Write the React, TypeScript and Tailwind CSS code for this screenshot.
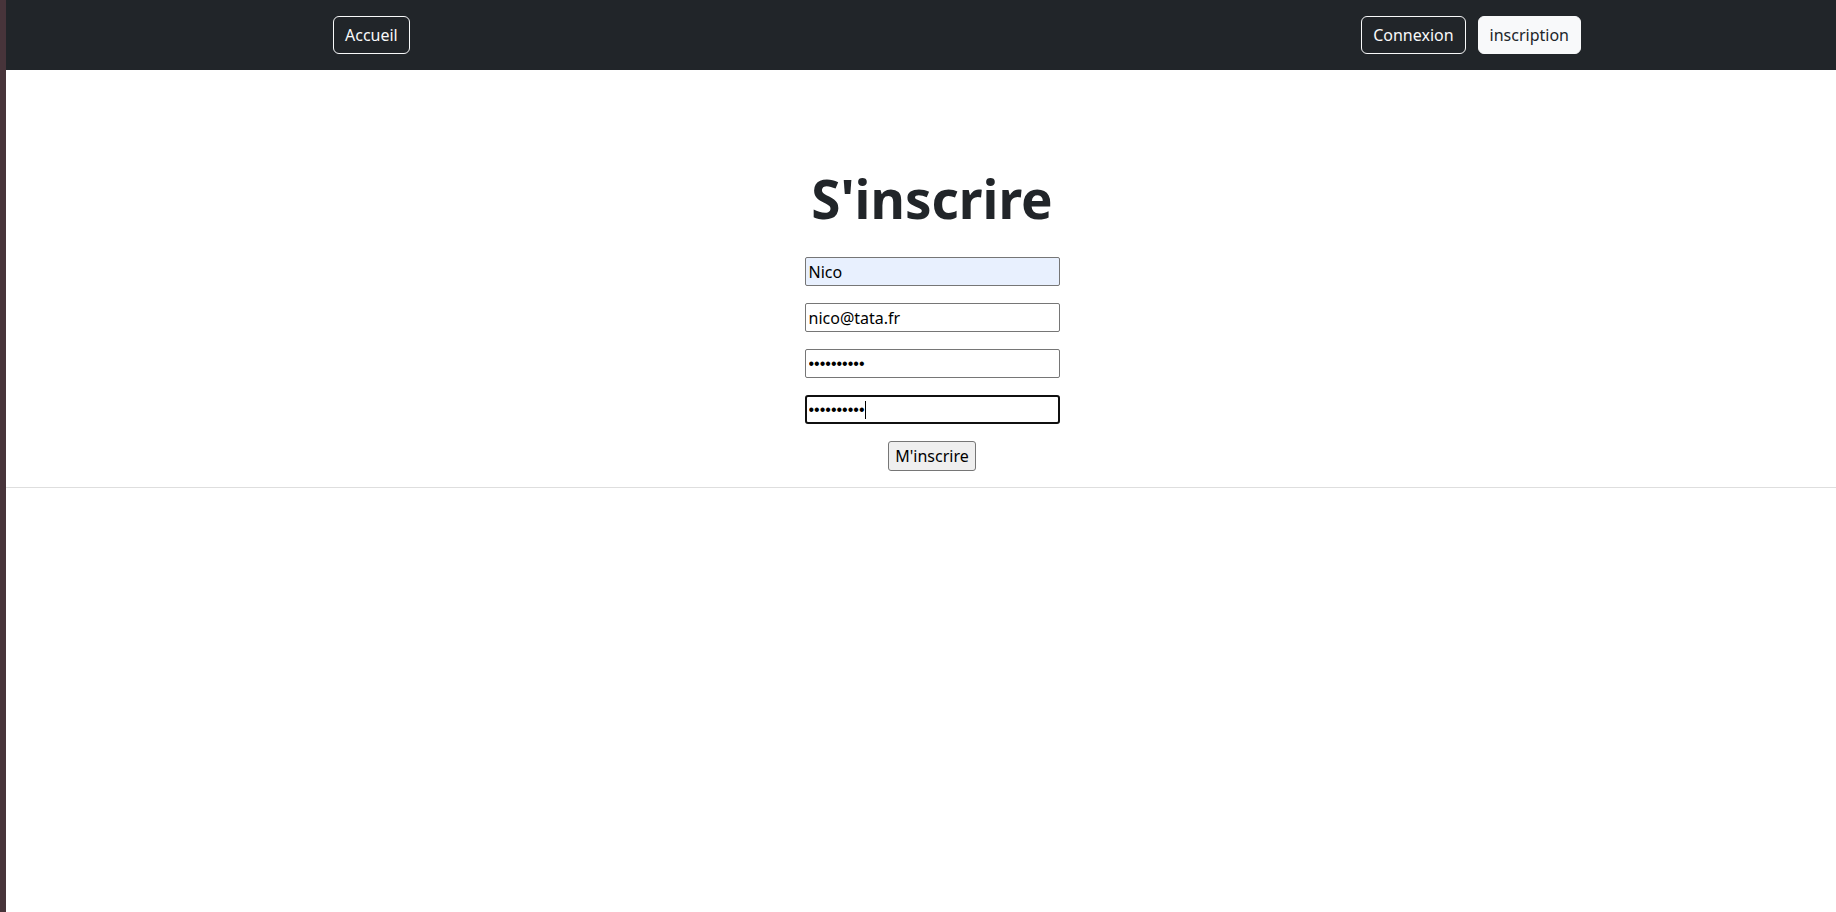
import React from 'react'

const font = { fontFamily: '"Noto Sans", "Open Sans", sans-serif' }

const NavButton: React.FC<{ label: string; filled?: boolean }> = ({ label, filled }) => (
  <a
    href="#"
    className={
      filled
        ? 'h-[38px] px-[11px] flex items-center rounded-[6px] border border-[#f8f9fa] bg-[#f8f9fa] text-[#212529] text-[16px]'
        : 'h-[38px] px-[11px] flex items-center rounded-[6px] border border-[#f8f9fa] text-[#f8f9fa] text-[16px]'
    }
  >
    {label}
  </a>
)

const Field: React.FC<{ value: string; type?: string; autofill?: boolean; focused?: boolean }> = ({
  value,
  type = 'text',
  autofill,
  focused,
}) => {
  const dots = type === 'password' ? { fontFamily: '"Liberation Sans", Arial, sans-serif' } : undefined
  if (focused) {
    return (
      <div className="relative w-[255px] h-[29px]">
        <input
          type={type}
          defaultValue={value}
          style={dots}
          className="w-full h-full px-[2px] border-2 border-[#101010] rounded-[3px] bg-white text-black text-[16px] outline-none"
        />
        <span className="absolute left-[60px] top-[6px] w-px h-[18px] bg-black" />
      </div>
    )
  }
  return (
    <input
      type={type}
      defaultValue={value}
      style={dots}
      className={
        autofill
          ? 'w-[255px] h-[29px] px-[3px] border border-[#767676] rounded-[2px] bg-[#e8f0fe] text-black text-[16px] outline-none'
          : 'w-[255px] h-[29px] px-[3px] border border-[#767676] rounded-[2px] bg-white text-black text-[16px] outline-none'
      }
    />
  )
}

export default function App() {
  return (
    <div className="flex min-h-[912px] bg-white" style={font}>
      <div className="w-[6px] shrink-0 bg-[#47343a]" />
      <div className="flex-1 flex flex-col">
        <nav className="h-[70px] bg-[#212529] flex items-center justify-between pl-[327px] pr-[255px]">
          <NavButton label="Accueil" />
          <div className="flex gap-[12px]">
            <NavButton label="Connexion" />
            <NavButton label="inscription" filled />
          </div>
        </nav>

        <main className="flex flex-col items-center pt-[98px] pl-[22px]">
          <h1 className="text-[53px] leading-[62px] font-bold text-[#212529] mb-[27px]">S'inscrire</h1>
          <form className="flex flex-col items-center gap-[17px]" onSubmit={(e) => e.preventDefault()}>
            <Field value="Nico" autofill />
            <Field value="nico@tata.fr" />
            <Field value="azertyuiop" type="password" />
            <Field value="azertyuiop" type="password" focused />
            <button
              type="submit"
              className="h-[30px] px-[6px] border border-[#767676] rounded-[3px] bg-[#efefef] text-black text-[16px]"
            >
              M'inscrire
            </button>
          </form>
        </main>
        <hr className="mt-[16px] border-0 border-t border-[#dedede]" />
      </div>
    </div>
  )
}
